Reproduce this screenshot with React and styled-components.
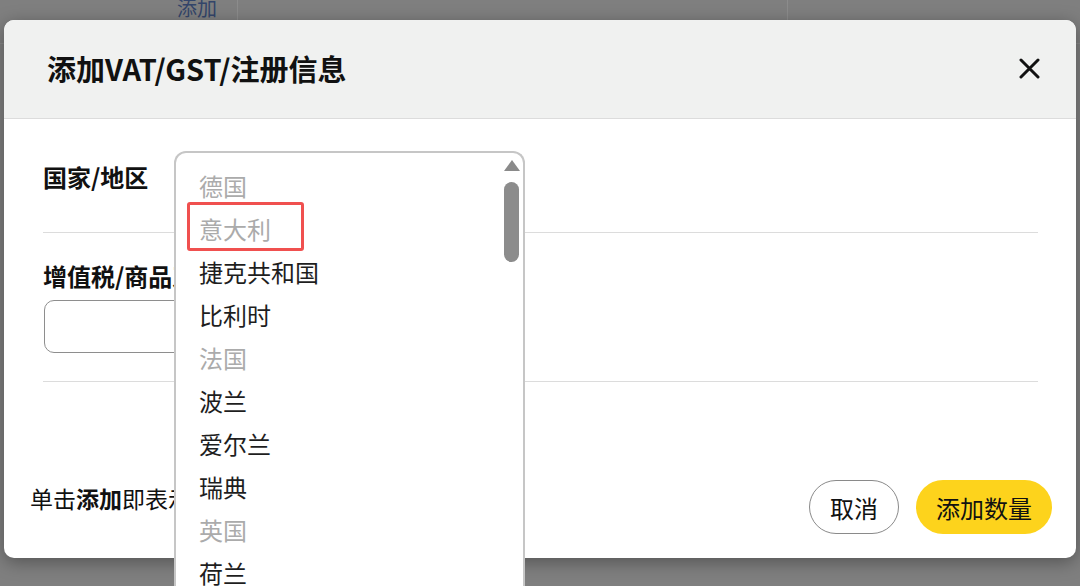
import React from "react";
import styled, { createGlobalStyle } from "styled-components";

const GlobalStyle = createGlobalStyle`
  html, body {
    margin: 0;
    padding: 0;
    width: 1080px;
    height: 586px;
    overflow: hidden;
    background: #7f7f7f;
    font-family: "Noto Sans CJK SC", "Noto Sans", sans-serif;
  }
`;

const COUNTRIES = [
  { name: "德国", disabled: true },
  { name: "意大利", disabled: true, marked: true },
  { name: "捷克共和国" },
  { name: "比利时" },
  { name: "法国", disabled: true },
  { name: "波兰" },
  { name: "爱尔兰" },
  { name: "瑞典" },
  { name: "英国", disabled: true },
  { name: "荷兰" },
  { name: "西班牙" },
];

const Backdrop = styled.div`
  position: relative;
  width: 1080px;
  height: 586px;
  background: #7f7f7f;
`;

const PageRow = styled.div`
  display: grid;
  grid-template-columns: 238px 550px 1fr;
  height: 43px;
  border-bottom: 1px solid #8a8a8a;
`;

const PageCell = styled.div`
  border-right: ${(p) => (p.$last ? "none" : "1px solid #8c8c8c")};
  display: flex;
  justify-content: flex-end;
  padding-right: 20px;
  font-size: 20px;
  line-height: 16px;
  color: #33456a;
`;

const Modal = styled.div`
  position: absolute;
  left: 4px;
  top: 20px;
  width: 1072px;
  height: 538px;
  background: #fff;
  border-radius: 10px;
  box-shadow: 0 4px 18px rgba(0, 0, 0, 0.35);
  display: flex;
  flex-direction: column;
`;

const Header = styled.div`
  height: 99px;
  box-sizing: border-box;
  flex-shrink: 0;
  display: flex;
  align-items: center;
  justify-content: space-between;
  padding: 0 36px 2px 43px;
  background: #f0f1f0;
  border-bottom: 1px solid #dcdcdc;
  border-radius: 10px 10px 0 0;
`;

const Title = styled.h2`
  margin: 0;
  font-size: 29px;
  font-weight: 700;
  color: #111;
`;

const CloseButton = styled.button`
  all: unset;
  width: 21px;
  height: 21px;
  display: flex;
  cursor: pointer;
`;

const Body = styled.div`
  padding: 0 38px 0 39px;
`;

const Section = styled.div`
  display: flex;
  flex-direction: ${(p) => (p.$column ? "column" : "row")};
  align-items: flex-start;
  padding: ${(p) => p.$padding};
  border-bottom: 1.5px solid #dcdcdc;
`;

const Label = styled.label`
  font-size: 24px;
  font-weight: 700;
  color: #111;
  line-height: ${(p) => p.$lh || "32px"};
  width: ${(p) => p.$width || "auto"};
  white-space: nowrap;
`;

const SelectWrap = styled.div`
  position: relative;
  width: 351px;
  height: 52px;
`;

const Listbox = styled.ul`
  position: absolute;
  left: 0;
  top: 0;
  z-index: 10;
  width: 351px;
  height: 440px;
  box-sizing: border-box;
  margin: 0;
  padding: 11px 0 0;
  list-style: none;
  background: #fff;
  border: 2px solid #c6c6c6;
  border-bottom: none;
  border-radius: 12px 12px 0 0;
  overflow: hidden;
`;

const Option = styled.li`
  position: relative;
  height: 43px;
  line-height: 43px;
  padding-left: 23px;
  font-size: 24px;
  color: ${(p) => (p.$disabled ? "#ababab" : "#1e1e1e")};
`;

const Marker = styled.span`
  position: absolute;
  left: 11px;
  top: -5px;
  width: 117px;
  height: 49px;
  box-sizing: border-box;
  border: 3.5px solid #f0504f;
  border-radius: 3px;
`;

const ScrollArrow = styled.span`
  position: absolute;
  left: 328px;
  top: 7px;
  width: 0;
  height: 0;
  border-left: 8px solid transparent;
  border-right: 8px solid transparent;
  border-bottom: 11px solid #8a8a8a;
`;

const ScrollThumb = styled.span`
  position: absolute;
  left: 328px;
  top: 29px;
  width: 15px;
  height: 80px;
  border-radius: 8px;
  background: #8c8c8c;
`;

const TextInput = styled.input`
  margin-top: 8px;
  margin-left: 1px;
  width: 340px;
  height: 53px;
  box-sizing: border-box;
  border: 1.5px solid #8e8e8e;
  border-radius: 10px;
  font-size: 20px;
  padding: 0 14px;
  outline: none;
`;

const Footer = styled.div`
  flex: 1;
  display: flex;
  align-items: flex-end;
  justify-content: space-between;
  padding: 0 24px 24px 26px;
`;

const Notice = styled.p`
  margin: 0 0 18px;
  font-size: 23px;
  line-height: 36px;
  color: #111;

  b {
    font-weight: 700;
  }
`;

const Actions = styled.div`
  display: flex;
  gap: 17px;
`;

const Button = styled.button`
  height: 54px;
  box-sizing: border-box;
  padding: 0 20px;
  border-radius: 27px;
  font-family: inherit;
  font-size: 24px;
  color: #111;
  cursor: pointer;
  border: ${(p) => (p.$primary ? "none" : "1.5px solid #8a8a8a")};
  background: ${(p) => (p.$primary ? "#fdd31c" : "#fff")};
`;

export default function App() {
  return (
    <>
      <GlobalStyle />
      <Backdrop>
        <PageRow>
          <PageCell>添加</PageCell>
          <PageCell />
          <PageCell $last />
        </PageRow>

        <Modal role="dialog" aria-label="添加VAT/GST/注册信息">
          <Header>
            <Title>添加VAT/GST/注册信息</Title>
            <CloseButton aria-label="关闭">
              <svg width="21" height="21" viewBox="0 0 21 21">
                <path
                  d="M2 2 L19 19 M19 2 L2 19"
                  stroke="#111"
                  strokeWidth="3"
                  strokeLinecap="round"
                />
              </svg>
            </CloseButton>
          </Header>

          <Body>
            <Section $padding="32px 0 29px">
              <Label $width="131px" $lh="52px">
                国家/地区
              </Label>
              <SelectWrap>
                <Listbox role="listbox">
                  {COUNTRIES.map((c) => (
                    <Option key={c.name} $disabled={c.disabled}>
                      {c.marked && <Marker />}
                      {c.name}
                    </Option>
                  ))}
                  <ScrollArrow />
                  <ScrollThumb />
                </Listbox>
              </SelectWrap>
            </Section>

            <Section $column $padding="27px 0 28px">
              <Label>增值税/商品及服务税/注册号</Label>
              <TextInput type="text" />
            </Section>
          </Body>

          <Footer>
            <Notice>
              单击<b>添加</b>即表示您确认信息无误
            </Notice>
            <Actions>
              <Button>取消</Button>
              <Button $primary>添加数量</Button>
            </Actions>
          </Footer>
        </Modal>
      </Backdrop>
    </>
  );
}
